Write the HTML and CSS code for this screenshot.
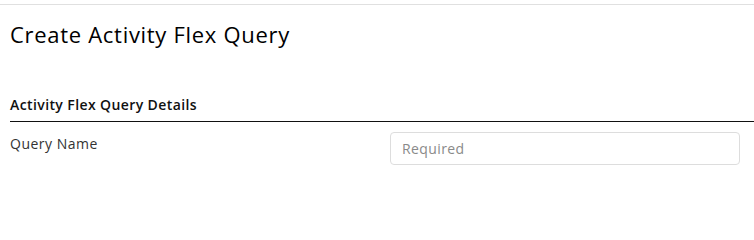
FILE: index.html
```html
<!DOCTYPE html>
<html>
<head>
<meta charset="utf-8">
<link rel="stylesheet" href="styles.css">
</head>
<body>
<div class="topbar"></div>
<main class="page">
  <h1 class="title">Create Activity Flex Query</h1>
  <section class="section">
    <h2 class="section-title">Activity Flex Query Details</h2>
    <div class="row">
      <label class="label" for="qname">Query Name</label>
      <input class="input" id="qname" type="text" placeholder="Required">
    </div>
  </section>
</main>
</body>
</html>
```
FILE: styles.css
```css
* { box-sizing: border-box; }
html, body { margin: 0; padding: 0; background: #fff; }
body { font-family: "Open Sans", Lato, sans-serif; color: #111; }
.topbar { height: 5px; border-bottom: 1px solid #e0e0e0; }
.page { padding: 0 0 0 10px; }
.title { margin: 0; padding-top: 14px; font-size: 22px; font-weight: 400; line-height: 30px; color: #000; letter-spacing: 0.7px; }
.section { margin-top: 47px; }
.section-title { margin: 0; font-size: 14px; font-weight: 600; line-height: 18px; padding-bottom: 7px; border-bottom: 1px solid #111; color: #111; letter-spacing: 0.4px; }
.row { display: grid; grid-template-columns: 380px 350px; padding-top: 10px; }
.label { font-size: 14px; line-height: 20px; color: #333; padding-top: 2px; letter-spacing: 0.5px; }
.input { height: 33px; border: 1px solid #ddd; border-radius: 4px; padding: 0 11px; font-family: "Open Sans", sans-serif; font-size: 14px; color: #333; outline: none; letter-spacing: 0.4px; }
.input::placeholder { color: #8a8a8a; }
```
